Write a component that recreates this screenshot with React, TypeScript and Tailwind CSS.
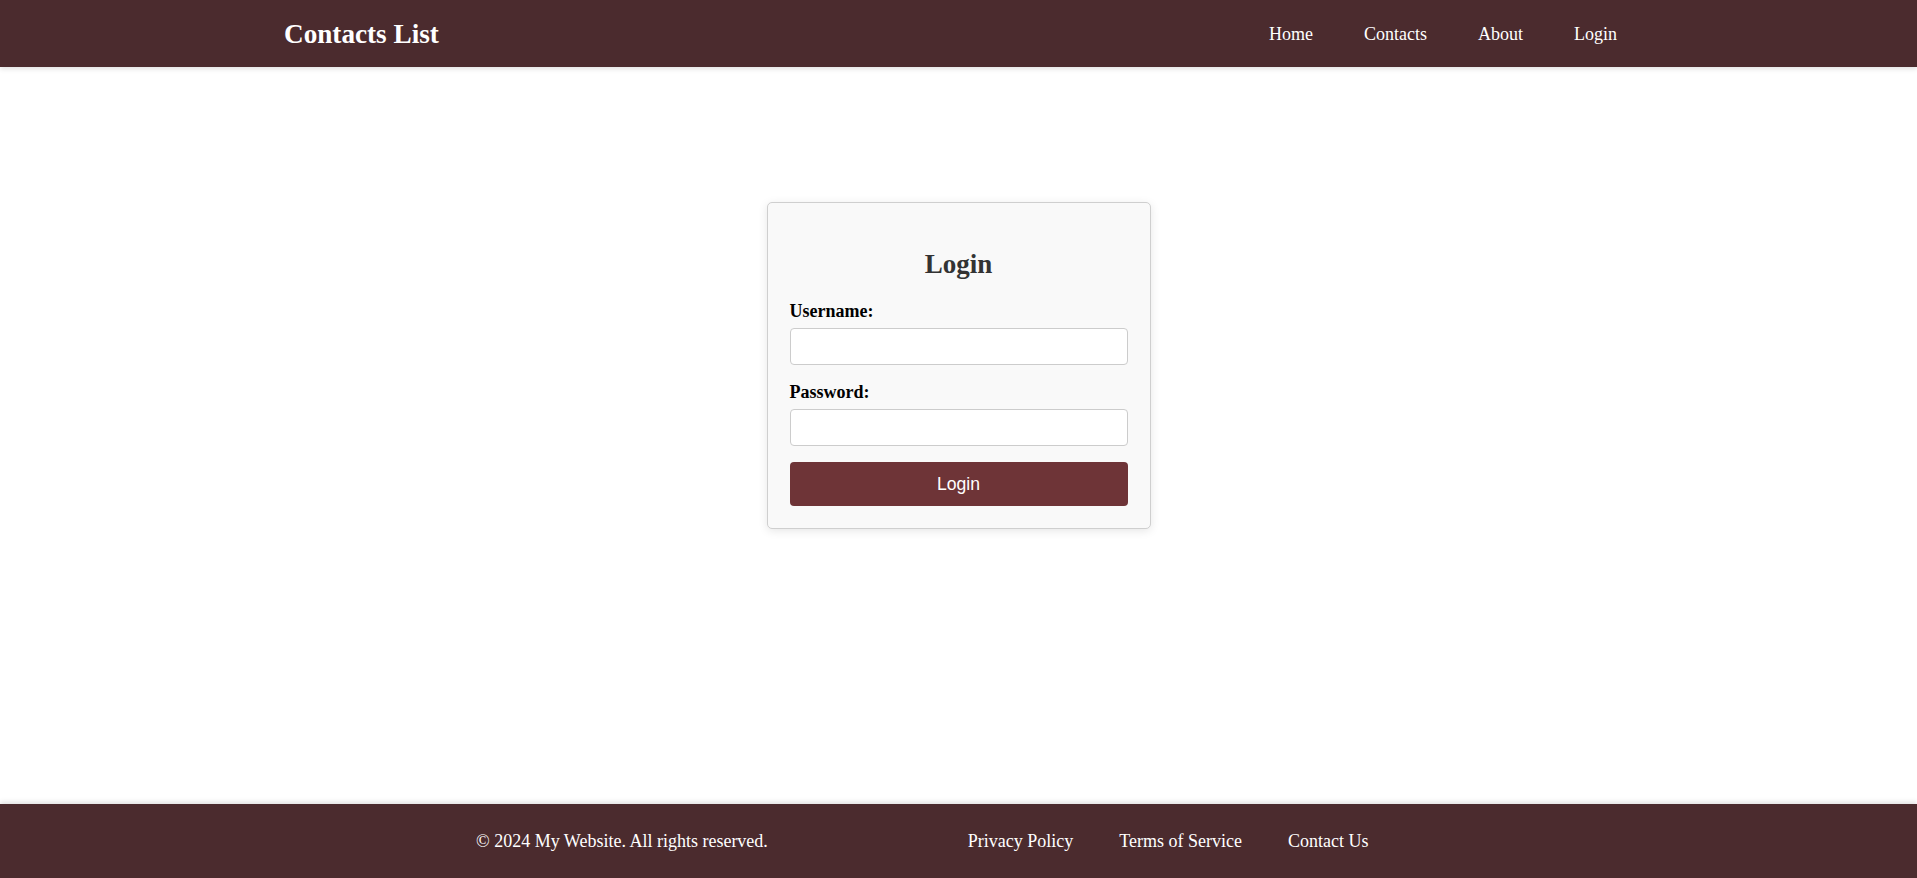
import React from "react";

export default function App() {
  const serif = { fontFamily: '"Liberation Serif", "Times New Roman", serif' };
  return (
    <div className="min-h-screen flex flex-col bg-white" style={serif}>
      <header className="relative z-10 h-[67px] shrink-0 bg-[#4b2b2e] shadow-[0_2px_5px_rgba(0,0,0,0.12)] flex items-center justify-between pl-[284px] pr-[300px] text-white">
        <h1 className="text-[27.2px] font-bold leading-[30px]">Contacts List</h1>
        <nav className="flex items-center gap-[51px] text-[18px] leading-[20px]">
          <a href="#">Home</a>
          <a href="#">Contacts</a>
          <a href="#">About</a>
          <a href="#">Login</a>
        </nav>
      </header>

      <main className="flex-1 flex justify-center items-start pt-[135px]">
        <div className="w-[384px] rounded-[5px] border border-[#cfcfcf] bg-[#f9f9f9] p-[22px] shadow-[0_2px_10px_rgba(0,0,0,0.1)]">
          <h2 className="mt-[24px] text-center text-[27px] font-bold leading-[30px] text-[#333]">Login</h2>
          <label className="mt-[22px] block text-[18px] font-bold leading-[20px] text-black">Username:</label>
          <input
            type="text"
            className="mt-[7px] block h-[37px] w-full rounded-[4px] border border-[#cccccc] bg-white px-2 outline-none"
          />
          <label className="mt-[17px] block text-[18px] font-bold leading-[20px] text-black">Password:</label>
          <input
            type="password"
            className="mt-[7px] block h-[37px] w-full rounded-[4px] border border-[#cccccc] bg-white px-2 outline-none"
          />
          <button
            type="button"
            className="mt-[16px] block h-[44px] w-full rounded-[4px] bg-[#6e3437] text-[17.6px] text-white"
            style={{ fontFamily: '"Liberation Sans", Arial, sans-serif' }}
          >
            Login
          </button>
        </div>
      </main>

      <footer className="relative z-10 h-[74px] shrink-0 bg-[#4b2b2e] shadow-[0_-2px_5px_rgba(0,0,0,0.12)] flex items-center pl-[476px] text-white text-[18px] leading-[20px]">
        <p>© 2024 My Website. All rights reserved.</p>
        <div className="ml-[200px] flex items-center gap-[46px]">
          <a href="#">Privacy Policy</a>
          <a href="#">Terms of Service</a>
          <a href="#">Contact Us</a>
        </div>
      </footer>
    </div>
  );
}
